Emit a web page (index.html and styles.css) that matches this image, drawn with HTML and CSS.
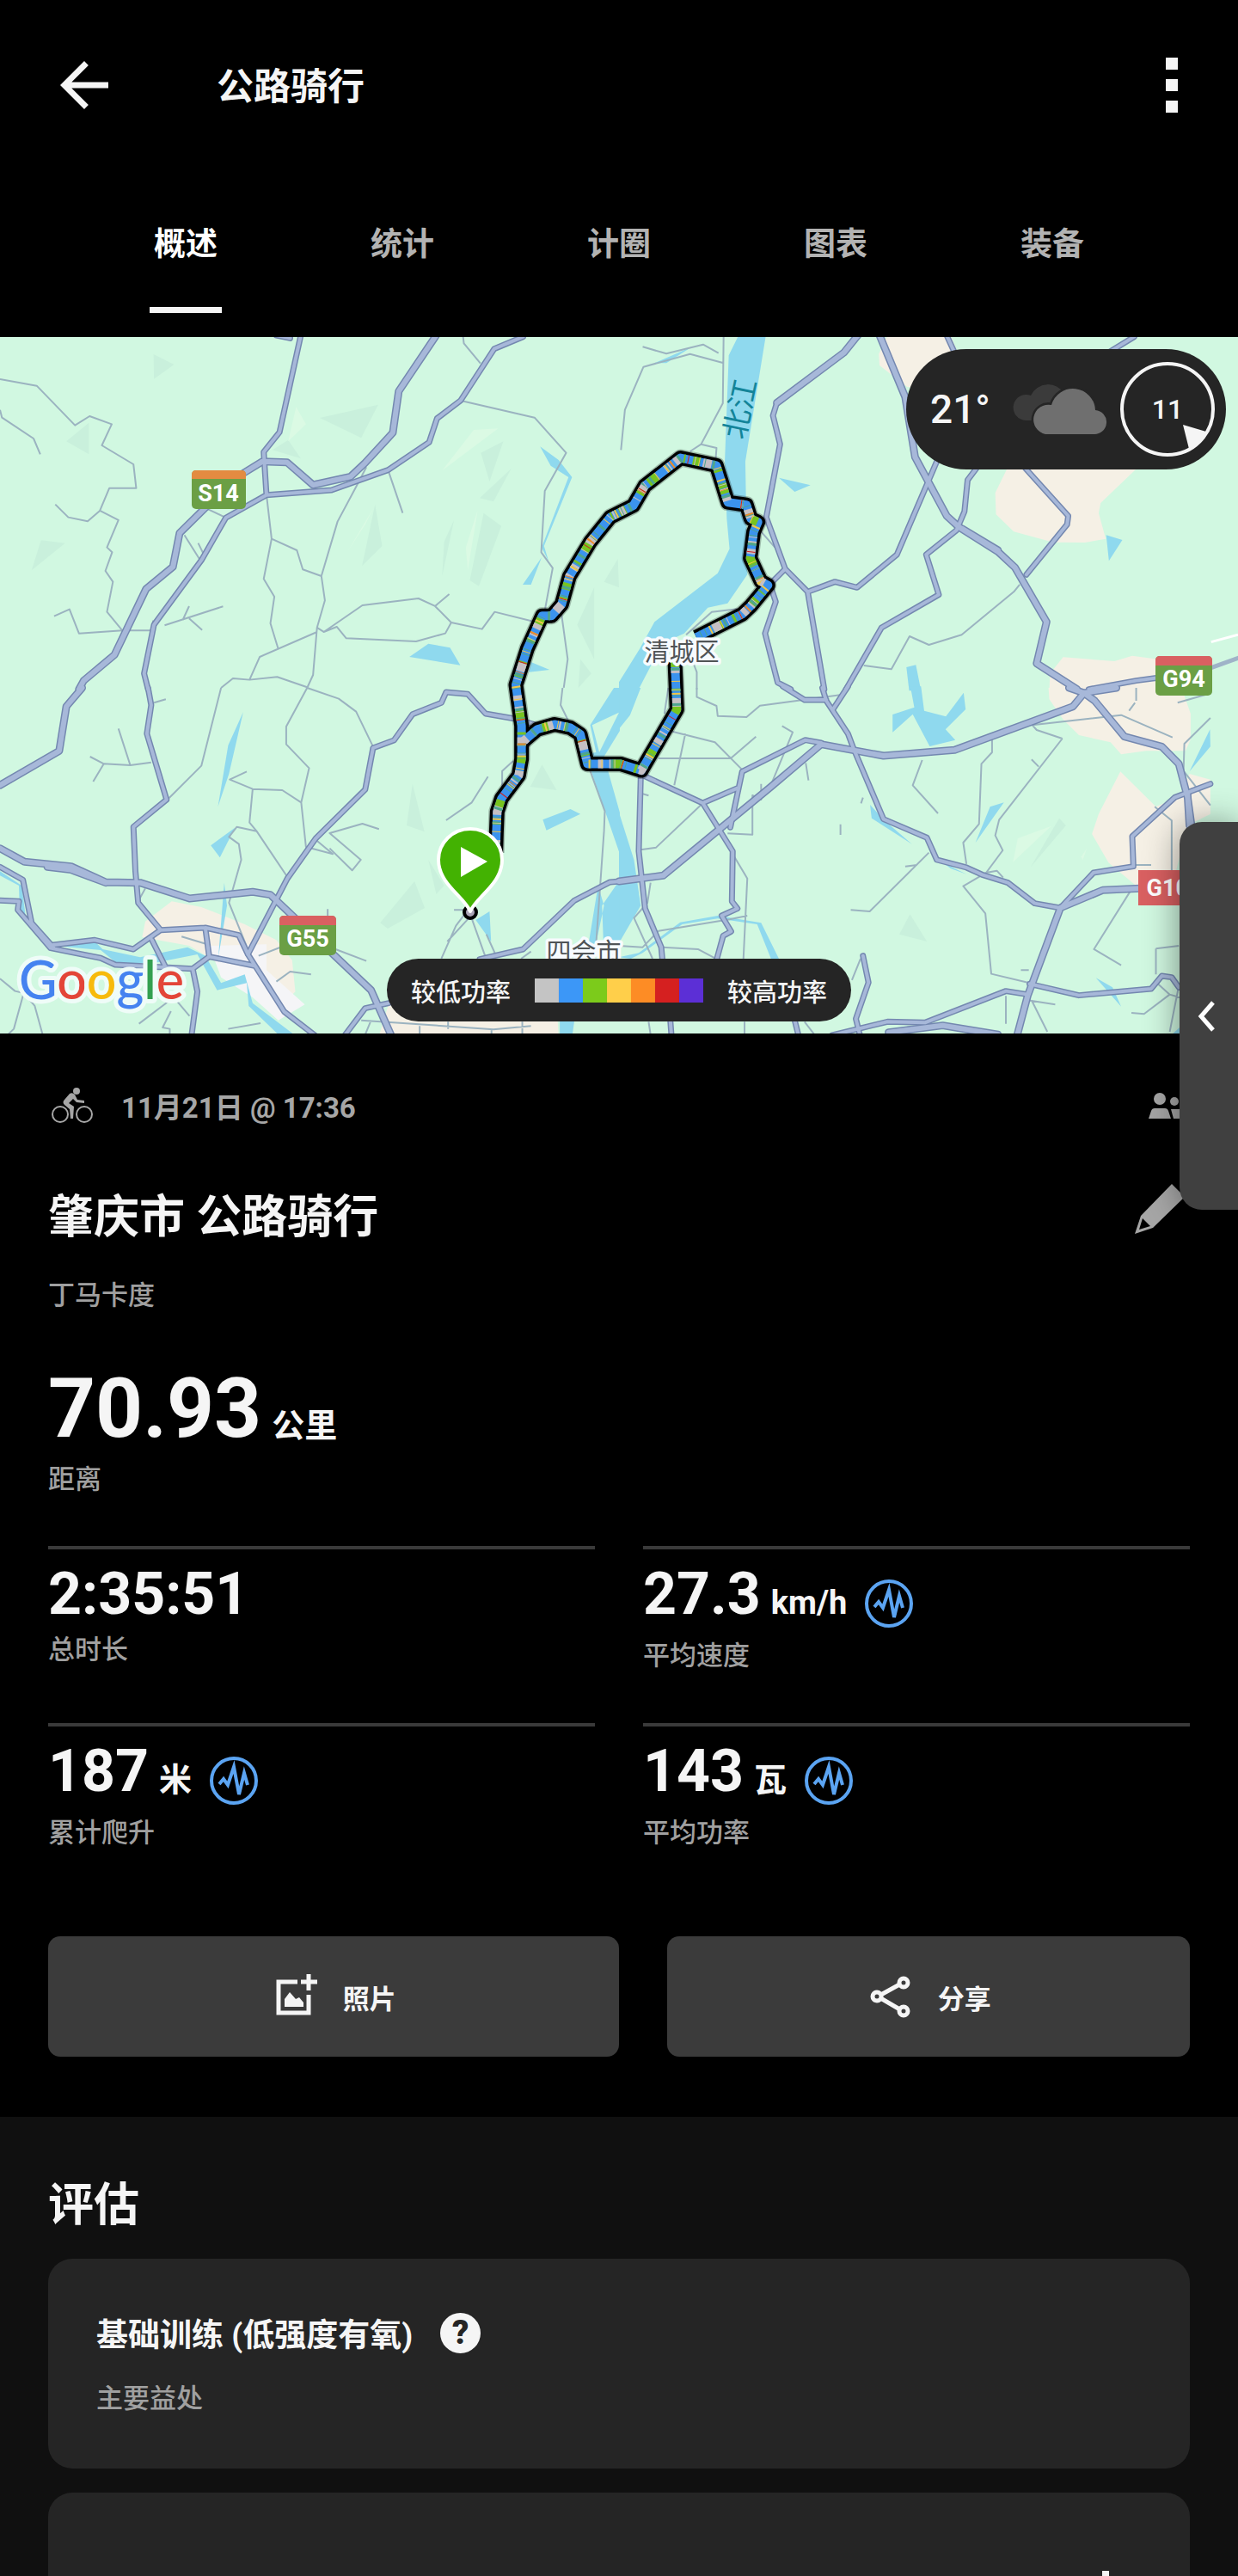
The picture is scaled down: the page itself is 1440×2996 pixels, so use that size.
FILE: index.html
```
<!DOCTYPE html>
<html lang="zh-CN">
    <head>
        <meta charset="utf-8">
        <meta name="viewport" content="width=device-width, initial-scale=1">
        <title>公路骑行</title>
        <link rel="stylesheet" href="styles.css">
    </head>
    <body>
        <header class="top-bar">
            <button class="icon-button" aria-label="返回">
                <svg class="icon-back" viewBox="0 0 24 24"><path d="M20 11H7.8l5.6-5.6L12 4l-8 8 8 8 1.4-1.4L7.8 13H20z"/></svg>
            </button>
            <h1>公路骑行</h1>
            <button class="icon-button" aria-label="更多">
                <svg class="icon-more" viewBox="0 0 14 64"><path d="M0 0h14v14H0zM0 25h14v14H0zM0 50h14v14H0z"/></svg>
            </button>
        </header>
        <nav class="tabs">
            <a class="active" href="#overview">概述</a>
            <a href="#stats">统计</a>
            <a href="#laps">计圈</a>
            <a href="#charts">图表</a>
            <a href="#gear">装备</a>
        </nav>

        <section class="map" id="overview">
            <svg class="map-canvas" viewBox="0 0 1440 810" role="img" aria-label="路线地图">
                <defs>
                    <!-- highways, one group per tile -->
                    <g id="highways">
                        <g transform="translate(0 -2) scale(.4592 .3333)">
                            <path d="M1105 0L1010 195 995 340 925 445 888 493 793 522 727 443 665 440 600 495 525 595 455 690 438 808 370 885 290 1115 212 1205 200 1235"/>
                        </g>
                        <g transform="translate(720 -2) scale(.4592 .3333)">
                            <path d="M660 0L725 215 750 425 830 630 860 668 960 755 1003 810 1083 1000 1058 1145 1160 1235M605 0L570 60 400 235M870 675L960 750"/>
                        </g>
                        <g transform="translate(0 408) scale(.4592 .3333)">
                            <path d="M208 0L168 65 150 220 0 340M0 560L62 607 180 623 268 678 355 680 480 735 640 712 685 722 940 1055 990 1210M120 625L180 635 268 680"/>
                        </g>
                        <g transform="translate(720 408) scale(.4592 .3333)">
                            <path d="M1140 0L1178 18 1205 45 1280 170 1375 205 1418 265 1440 380 1450 480M1178 18L1150 65 850 217 670 237 512 197 385 345 112 655 0 675M1118 768L1035 1075 1008 1215M1118 768L1225 706 1320 700M1178 18L1260 0M1440 370L1445 480M683 1202L820 1178 960 1210"/>
                        </g>
                    </g>
                    <g id="roads">
                        <g transform="translate(0 -2) scale(.4592 .3333)">
                            <path d="M1325 5L1252 47 1167 227 1107 290 1087 373 983 470 840 540 675 557 572 637 510 785 390 1010 365 1180 375 1235M762 0L708 338 668 407 675 557M700 0L735 10"/>
                        </g>
                        <g transform="translate(720 -2) scale(.4592 .3333)">
                            <path d="M400 235L390 280 408 380 373 635 421 815 478 895 520 1235M421 815L385 865M478 895L547 860 603 880 704 765 805 440M830 0L850 60M1305 5L1240 60M905 465L883 505 875 615 855 680 778 765 810 905 665 1020 575 1235M1030 465L1138 630 1135 660 1032 835M385 880L397 930 370 1040 402 1212 435 1235M1190 1235L1310 1205 1365 1195"/>
                        </g>
                        <g transform="translate(0 408) scale(.4592 .3333)">
                            <path d="M375 0L383 60 372 160 422 390 338 485 343 640 350 750 407 845 520 837 605 863 628 930 720 1130 800 1215M407 845L338 912 240 880 135 897M0 625L58 670 80 820 135 905M0 742L48 745 45 775 128 908 255 943 292 966 488 980 530 938 645 970M488 980L500 1060 485 1215M520 837L530 938M385 880L418 970M628 930L728 665 800 525 925 355 945 210 998 183 1045 92 1118 52 1130 15 1185 22 1230 90 1305 108 1365 132M1570 675L1545 678 1455 742 1325 912 1215 947M872 1215L925 1118 985 1100"/>
                        </g>
                        <g transform="translate(720 408) scale(.4592 .3333)">
                            <path d="M515 0L525 45 580 160 595 215 670 458 780 523 805 600 880 627 920 652 985 680 1053 752 1118 768 1202 645 1303 623 1300 518 1408 382 1498 335M415 -5L470 42 525 42M580 -5L542 75M512 192L472 182 312 292 282 487M300 350L212 402 60 305M55 315L50 570 66 770 107 905 110 950M212 402L288 570 286 745 300 770 260 795 284 850 264 865 247 950M618 935L632 1028 600 1155 610 1210M540 1212L680 1165 775 1168 980 1058 1035 1070M1040 1033L1165 1073 1348 1050 1375 1005 1400 1010 1418 1045M130 1160L133 1215M445 1160L455 1215M683 1202L740 1190"/>
                        </g>
                    </g>
                    <path id="route" d="M230 1285L232 1225 235 1160 250 1120 310 1050 320 1000 320 900 300 775 340 665 392 565 425 565 460 530 487 445 560 340 630 265 710 230 750 170 875 85 1000 108 1040 220 1105 228 1120 270 1145 280 1130 310 1118 390 1155 460 1180 472 1120 535 1090 560 930 630"/>
                    <path id="route-south" d="M855 700L862 850 738 1035 665 1015 550 1015 525 925 490 905 435 895 375 910 328 945"/>
                </defs>

                <rect class="land" width="1440" height="810"/>

                <!-- hill shading -->
                <g class="tile hill" transform="translate(0 -2) scale(.4592 .3333)">
                    <path d="M389 66L441 102 390 152zM225 305L168 370 225 415zM104 715L165 725 80 820zM958 242L810 288 915 358zM730 365L690 400 762 430zM1275 370L1218 410 1240 510zM1295 465L1215 568 1250 580zM1225 620L1270 665 1213 875 1190 855zM1150 645L1125 720 1120 840zM950 590L968 735 917 805zM1505 880L1462 1010 1505 1130zM1470 1130L1498 1180 1465 1230zM1565 780L1530 860 1568 880z"/>
                    <path class="light" d="M750 250L775 310 730 370zM1200 330L1262 325 1120 472zM945 605L925 660 880 755zM1210 610L1185 820 1180 740z"/>
                </g>
                <g class="tile hill" transform="translate(0 408) scale(.4592 .3333)">
                    <path d="M1373 268L1410 357 1343 345zM1045 335L1075 502 1030 480zM1050 675L1076 768 982 840 963 820zM1085 600L1105 720 1125 690z"/>
                </g>
                <g class="tile hill" transform="translate(720 408) scale(.4592 .3333)">
                    <path d="M737 790L780 885 710 860zM1115 455L1132 480 1043 625z"/>
                    <path class="light" d="M1095 482L1010 525 998 608zM1185 560L1170 590 1175 600z"/>
                </g>

                <!-- built-up areas -->
                <g class="tile town" transform="translate(720 -2) scale(.4592 .3333)">
                    <path d="M680 0H840L900 200 730 180 660 105 658 65zM985 460H1315L1220 585 1215 620 1233 710 1180 723 1100 722 1000 685 955 625 953 550zM1090 1235L1092 1180 1125 1123 1255 1137 1300 1118 1365 1130V1235z"/>
                </g>
                <g class="tile town" transform="translate(720 408) scale(.4592 .3333)">
                    <path d="M1088 0H1425L1448 90V180L1435 220H1335L1272 232 1245 190 1165 165 1125 110 1090 40zM1270 292L1360 415 1418 380 1445 300 1498 320V440L1440 480 1400 700H1318L1240 610 1198 510 1215 440z"/>
                </g>
                <g class="tile town" transform="translate(0 408) scale(.4592 .3333)">
                    <path d="M368 815L435 745 510 765 620 825 700 880 740 950 748 1060 720 1100 600 1000 480 900 360 870zM985 1100H1410L1415 1215H960z"/>
                    <path class="white" d="M530 900L675 895V985L772 1105 705 1160 640 1080 560 1010z"/>
                </g>

                <!-- rivers and lakes -->
                <g class="tile water" transform="translate(720 -2) scale(.4592 .3333)">
                    <path d="M303 0L278 70 268 440 273 640 280 745 250 830 90 1000 52 1095 0 1210V1240H48L110 1075 165 1040 225 950 275 935 325 835 320 440 372 0zM185 40L120 97 90 97zM405 497L485 523 445 546zM1234 697L1275 714 1241 787zM728 1158L752 1150 765 1240H735z"/>
                </g>
                <g class="tile water" transform="translate(720 408) scale(.4592 .3333)">
                    <path d="M0 0H55L28 95 0 143zM0 435L38 600 55 760 0 890zM738 -5H765L773 80 828 100 873 17 878 75 827 145 852 182 787 204 744 92 693 155V93L748 68zM636 408L670 460 742 545 640 455zM975 400L940 415 903 540zM1497 145L1445 292 1498 205zM820 610L880 650 840 630zM1208 1012L1250 1045 1272 1112zM0 940L50 925 155 818 250 795 360 820 405 945H385L350 825 250 805 160 825 60 925 30 945zM1400 1210L1420 1185V1210z"/>
                </g>
                <g class="tile water" transform="translate(0 -2) scale(.4592 .3333)">
                    <path d="M1368 388L1415 435 1449 495 1378 735 1390 790 1372 740 1440 495 1395 455zM1372 775L1345 870 1324 870zM1085 1076L1140 1090 1166 1151 1037 1122zM1345 1140L1392 1167 1340 1175z"/>
                </g>
                <g class="tile water" transform="translate(0 408) scale(.4592 .3333)">
                    <path d="M1570 0H1555L1495 130 1510 225 1485 230 1500 300 1570 580V435L1530 240 1570 150V80L1518 225 1500 130 1570 85zM616 85L580 300 552 415 578 200zM595 488L534 550 557 592zM568 680L575 760 553 940zM1375 460L1445 423 1470 440 1384 497zM1240 780L1244 885 1205 810zM0 640L55 690 65 800 85 830 50 780 48 690 0 655zM140 900L240 885 260 912 355 940 475 905 520 935 560 1030 620 1000 640 1100 745 1210H705L630 1110 625 1030 550 1055 500 930 390 960 295 960 255 915zM1570 670L1525 760 1530 945H1570zM1515 690L1530 760 1510 890 1490 900zM1418 1160H1455L1450 1210H1418z"/>
                </g>

                <!-- local roads -->
                <g class="tile lane" transform="translate(0 -2) scale(.4592 .3333)">
                    <path d="M0 153L93 176 190 314 227 282 283 310 258 384 338 450 345 533H277L253 612 222 649 173 635 140 590M0 260L5 287 85 360 102 415M253 612L300 645 271 740 284 757 267 822 286 860 271 965 310 1030M137 980L176 956 200 1040 310 1030H385L388 995M417 1012L565 946M479 945L463 993M479 988L512 1028M467 697L505 780M502 725L518 770M524 605L570 635M675 557L688 710 668 850 695 912 685 1005 705 1095M688 710L752 750 767 817 814 840 823 925 803 1020 793 1185 778 1230M814 840L855 650 908 513 928 460M983 470L1020 620M803 1035L658 1122 632 1202M560 1230L590 1197 632 1202 702 1192 778 1228M803 1020L820 1035 918 942 1060 918 1102 945 1138 903M1102 945L1143 1002 1128 1040 1054 1068 877 1057 853 1017 820 1035M1143 1002L1221 1025 1253 965 1355 1000M1173 5L1175 28 1217 98M1170 229L1354 287 1434 410 1380 543 1371 757 1400 812 1378 975M1422 970L1438 1130 1428 1230"/>
                </g>
                <g class="tile lane" transform="translate(720 -2) scale(.4592 .3333)">
                    <path d="M60 40L120 64 213 32 252 62M265 0L263 237 208 380 247 393 245 430M263 96L180 65 62 110 15 260 5 400M208 380L180 405M360 685L395 740M170 1045L235 965 300 955M190 1150L197 1175V1235M1015 870L1000 895 868 1045 785 1080 736 1050 690 1165 620 1152"/>
                    <path class="white-line" d="M1500 1070L1568 1045"/>
                    <path class="wide-line" d="M1500 1160L1570 1125"/>
                </g>
                <g class="tile lane" transform="translate(0 408) scale(.4592 .3333)">
                    <path d="M560 0L510 272 428 385M390 52L420 40M300 142L330 270M228 240L263 265 330 270 383 260M263 265L236 327M778 0L725 135V197L783 280 763 400 775 555 843 580 800 530M778 0L858 38 902 83 945 205M625 292L582 320 640 353 715 357 763 400M640 353L632 470 650 500 728 660M650 500L600 485 580 520 605 545 611 600 580 750 630 920M960 493L918 474 835 507 914 600 892 637 835 560M1236 310L1195 400 1130 462M1272 380V290L1300 255M1425 0L1420 60 1445 130M1495 290L1532 430 1530 500 1508 930M1190 800L1133 885M1150 775H1185L1155 830 1118 945M1195 805L1230 940M1232 860L1255 930M830 772V800M850 912L928 953M655 935L720 900M700 1025L735 990 788 1000M460 868L525 895M352 1172L440 1080 480 1145M0 1015L38 1058 60 1065 88 1110 108 1210M60 1065L35 1190 20 1210M433 1128L412 1185 430 1190V1210M578 1190L660 1170M915 1160L1250 1192 1345 1180M1063 1180V1210M1135 1165V1190M1245 1190V1210M1323 1165V1210M940 1160L925 1210M350 745L368 700M1345 920L1320 945"/>
                </g>
                <g class="tile lane" transform="translate(720 408) scale(.4592 .3333)">
                    <path d="M197 0V32L247 63 250 98 323 102 357 62 560 25M125 0L115 90M128 150L243 190 315 290M168 160L140 340M283 246L347 170M100 246H283M413 133L440 155 380 355M473 262L480 323M360 335V390L338 375V512L275 508M208 408L94 557 55 565M288 580L325 665 315 950M618 383L613 403M561 476V513M945 180V225L918 265 912 475 872 540 880 615M768 252L744 340 808 438M1123 177L1058 147 1047 130 1272 95 1402 173M1123 177L963 460 953 515 972 567 930 645 872 692 928 787 943 998 1040 1030M930 645L957 638 973 662M1045 250L1063 275M785 575L635 780 587 775M725 623L755 618M1303 618H1348M1357 415L1400 463V690M1295 710L1203 912 1272 968M1018 985H1038M980 1075V1172M1035 1090L1105 1105M1045 1090L1085 1200M1298 1134L1330 1138 1395 1070 1365 1033M1395 1070L1420 1080M1360 910V1000M1360 910L1418 900M1418 1040L1395 1200M1498 105L1432 195 1430 290 1498 410M1415 52L1495 20M1310 0V45M1307 52L1292 80M60 370L75 376M80 680L72 750 38 803 85 945M100 848L280 808 325 795M100 848L60 905 0 900M110 905L200 912 245 945M612 945L590 1020M75 1165L80 1210M318 1165V1210M470 1165L495 1210"/>
                </g>

                <use class="highway-edge" href="#highways"/>
                <use class="road-edge" href="#roads"/>
                <use class="highway-fill" href="#highways"/>
                <use class="road-fill" href="#roads"/>

                <!-- ridden track, coloured by power -->
                <g class="track" transform="translate(500 108) scale(.3333 .3827)">
                    <use class="track-glow" href="#route"/>
                    <use class="track-glow" href="#route-south"/>
                    <use class="track-edge" href="#route"/>
                    <use class="track-edge" href="#route-south"/>
                    <g class="track-power">
                        <use class="p-blue" href="#route"/>
                        <use class="p-blue" href="#route-south"/>
                        <use class="p-green" href="#route"/>
                        <use class="p-green" href="#route-south"/>
                        <use class="p-grey" href="#route"/>
                        <use class="p-grey" href="#route-south"/>
                        <use class="p-teal" href="#route"/>
                        <use class="p-teal" href="#route-south"/>
                        <use class="p-yellow" href="#route"/>
                        <use class="p-yellow" href="#route-south"/>
                        <use class="p-orange" href="#route"/>
                        <use class="p-red" href="#route"/>
                        <use class="p-red" href="#route-south"/>
                    </g>
                </g>
                <circle class="track-end" cx="547" cy="669" r="7"/>

                <g class="pin">
                    <path d="M547 668C540 651 510 636 510 608a37 36 0 0 1 74 0C584 636 554 651 547 668z"/>
                    <path class="pin-play" d="M536 593L567 610 536 628z"/>
                </g>

                <g class="shields">
                    <rect class="s-green" x="223" y="155" width="63" height="45" rx="5"/>
                    <path class="s-orange" d="M223 165v-5q0-5 5-5h53q5 0 5 5v5z"/>
                    <text x="254" y="191">S14</text>
                    <rect class="s-green" x="325" y="673" width="66" height="46" rx="5"/>
                    <path class="s-red" d="M325 684v-6q0-5 5-5h56q5 0 5 5v6z"/>
                    <text x="358" y="709">G55</text>
                    <rect class="s-green" x="1344" y="371" width="66" height="46" rx="5"/>
                    <path class="s-red" d="M1344 382v-6q0-5 5-5h56q5 0 5 5v6z"/>
                    <text x="1377" y="407">G94</text>
                    <rect class="s-red" x="1324" y="620" width="80" height="41"/>
                    <text x="1366" y="650">G107</text>
                </g>
                <text class="river-name" transform="translate(873 86) rotate(-78)">北江</text>
                <text class="place" x="793" y="377">清城区</text>
                <text class="place" x="679" y="726">四会市</text>
                <text class="google" x="22" y="770"><tspan class="g-blue">G</tspan><tspan class="g-red">o</tspan><tspan class="g-yellow">o</tspan><tspan class="g-blue">g</tspan><tspan class="g-green">l</tspan><tspan class="g-red">e</tspan></text>
            </svg>

            <div class="weather">
                <span class="temperature">21°</span>
                <svg class="icon-cloud" viewBox="0 0 110 62">
                    <path class="cloud-back" d="M16 44A15 15 0 1 1 22 15A22 22 0 0 1 61 13V44z"/>
                    <path class="cloud-front" d="M39 60A17 17 0 1 1 46 26A26 26 0 0 1 97 32A14 14 0 0 1 95 60z"/>
                </svg>
                <svg class="icon-wind" viewBox="0 0 112 112">
                    <circle cx="56" cy="56" r="53"/>
                    <path d="M74 74l27 8q-6 13-20 20z"/>
                    <text x="56" y="67">11</text>
                </svg>
            </div>

            <div class="legend">
                <span>较低功率</span>
                <div class="swatches"><i class="sw-grey"></i><i class="sw-blue"></i><i class="sw-green"></i><i class="sw-yellow"></i><i class="sw-orange"></i><i class="sw-red"></i><i class="sw-purple"></i></div>
                <span>较高功率</span>
            </div>
        </section>

        <button class="side-handle" aria-label="展开">
            <svg viewBox="0 0 20 36"><path d="M18 2L4 18 18 34"/></svg>
        </button>

        <main class="summary">
            <div class="meta">
                <svg class="icon-bike" viewBox="0 0 48 42">
                    <circle class="wheel" cx="10" cy="31" r="9"/>
                    <circle class="wheel" cx="38" cy="31" r="9"/>
                    <circle cx="29" cy="4" r="4"/>
                    <path d="M21 7q3-2 6 1l3 6 8 1v3l-9-1-4-4-5 5 6 4-1 14h-3l-1-11-6-5q-3-3 0-6z"/>
                </svg>
                <span class="date">11月21日 @ 17:36</span>
                <svg class="icon-people" viewBox="0 0 48 30">
                    <circle cx="13" cy="7" r="7"/><circle cx="30" cy="10" r="5"/>
                    <path d="M0 30l3-9q1-3 4-3h12q3 0 4 3l3 9zM26 19h12l5 11H29z"/>
                </svg>
            </div>
            <div class="title-row">
                <h2>肇庆市 公路骑行</h2>
                <button class="icon-button" aria-label="编辑">
                    <svg class="icon-edit" viewBox="0 0 64 58"><path d="M0 58L7 37 43 0 58 15 21 51zM5 53L18 49 9 40z" fill-rule="evenodd"/></svg>
                </button>
            </div>
            <p class="place-name">丁马卡度</p>

            <div class="distance">
                <div class="value"><strong>70.93</strong><span>公里</span></div>
                <p class="label">距离</p>
            </div>

            <div class="stats">
                <div class="stat">
                    <div class="value"><strong>2:35:51</strong></div>
                    <p class="label">总时长</p>
                </div>
                <div class="stat">
                    <div class="value"><strong>27.3</strong><span>km/h</span>
                        <a href="#charts" aria-label="平均速度图表"><svg class="icon-pulse" viewBox="0 0 58 58"><circle cx="29" cy="29" r="26"/><path d="M12 33l5-6 5 7 7-21 6 32 6-25 4 14"/></svg></a>
                    </div>
                    <p class="label">平均速度</p>
                </div>
                <div class="stat">
                    <div class="value"><strong>187</strong><span>米</span>
                        <a href="#charts" aria-label="累计爬升图表"><svg class="icon-pulse" viewBox="0 0 58 58"><circle cx="29" cy="29" r="26"/><path d="M12 33l5-6 5 7 7-21 6 32 6-25 4 14"/></svg></a>
                    </div>
                    <p class="label">累计爬升</p>
                </div>
                <div class="stat">
                    <div class="value"><strong>143</strong><span>瓦</span>
                        <a href="#charts" aria-label="平均功率图表"><svg class="icon-pulse" viewBox="0 0 58 58"><circle cx="29" cy="29" r="26"/><path d="M12 33l5-6 5 7 7-21 6 32 6-25 4 14"/></svg></a>
                    </div>
                    <p class="label">平均功率</p>
                </div>
            </div>

            <div class="actions">
                <button>
                    <svg viewBox="0 0 56 56"><path class="line" d="M31 11H9v36h35V26M44 2v19M35 11h19"/><path d="M16 40v-9l6-8 7 8 4-2 5 6v5z"/></svg>
                    照片
                </button>
                <button>
                    <svg viewBox="0 0 56 56"><path class="line" d="M14 28L43 12M14 28L43 45"/><circle class="node" cx="13" cy="28" r="5"/><circle class="node" cx="44" cy="12" r="5"/><circle class="node" cx="44" cy="45" r="5"/></svg>
                    分享
                </button>
            </div>
        </main>

        <section class="assessment">
            <h2>评估</h2>
            <div class="card">
                <div class="card-title">
                    <h3>基础训练 (低强度有氧)</h3>
                    <button class="help" aria-label="帮助">?</button>
                </div>
                <p class="label">主要益处</p>
            </div>
            <div class="card card-next">
                <svg class="icon-plus" viewBox="0 0 44 44"><path d="M18 0h8v18h18v8H26v18h-8V26H0v-8h18z"/></svg>
            </div>
        </section>
    </body>
</html>
```
FILE: styles.css
```
* {
    box-sizing: border-box;
}

body {
    margin: 0;
    position: relative;
    background-color: #000;
    color: #f5f5f5;
    font-family: Roboto, "Noto Sans CJK SC", sans-serif;
}

h1, h2, h3, p {
    margin: 0;
    font-weight: 700;
}

svg {
    display: block;
    fill: currentColor;
}

button {
    border: none;
    padding: 0;
    color: inherit;
    font-family: inherit;
    cursor: pointer;
}

.icon-button {
    background: none;
}

/* header */
.top-bar {
    display: flex;
    align-items: center;
    height: 198px;
    padding: 0 70px 0 56px;
}

.top-bar h1 {
    flex: 1;
    margin-left: 112px;
    padding-top: 4px;
    font-size: 43px;
    line-height: 60px;
}

.icon-back {
    width: 84px;
    height: 84px;
}

.icon-more {
    width: 14px;
    height: 64px;
}

.tabs {
    display: flex;
    height: 194px;
    padding: 0 90px;
}

.tabs a {
    flex: 1;
    display: flex;
    flex-direction: column;
    align-items: center;
    justify-content: space-between;
    padding: 60px 0 28px;
    color: #b3b3b3;
    font-size: 37px;
    font-weight: 700;
    line-height: 54px;
    text-decoration: none;
}

.tabs .active {
    color: #fff;
}

.tabs .active::after {
    content: "";
    width: 84px;
    height: 7px;
    background-color: #f5f5f5;
}

/* map */
.map {
    position: relative;
    overflow: hidden;
}

.map-canvas {
    width: 100%;
    height: auto;
}

.map-canvas path {
    vector-effect: non-scaling-stroke;
    stroke-linejoin: round;
}

.land { fill: #d1f8e1; }
.hill { fill: #c9f0dc; }
.hill .light { fill: #dbfae4; }
.town { fill: #f5f0e5; }
.town .white { fill: #f5f5f7; }
.water { fill: #8fd9ee; }

.lane {
    fill: none;
    stroke: #9bb3c0;
    stroke-width: 2px;
}

.lane .white-line {
    stroke: #fff;
    stroke-width: 3px;
}

.lane .wide-line {
    stroke: #9fb3c8;
    stroke-width: 5px;
}

.highway-edge, .road-edge, .highway-fill, .road-fill {
    fill: none;
    stroke: #7488b0;
    stroke-linecap: round;
}

.highway-edge { stroke-width: 9px; }
.road-edge { stroke-width: 7px; }

.highway-fill {
    stroke: #a7b8d9;
    stroke-width: 6px;
}

.road-fill {
    stroke: #a7b8d9;
    stroke-width: 4px;
}

.track {
    fill: none;
    stroke: #000;
}

.track-glow {
    stroke-width: 20px;
    opacity: .25;
}

.track-edge { stroke-width: 17px; }
.track-power { stroke-width: 10px; }
.p-blue { stroke: #3b93ee; }
.p-green { stroke: #78c41f; stroke-dasharray: 8 25 3 14 12 39 2 9; }
.p-grey { stroke: #c6c0c4; stroke-dasharray: 2 7 6 19 1 9 10 29 1 4; }
.p-teal { stroke: #4ea58f; stroke-dasharray: 1 8 3 23 1 5; }
.p-yellow { stroke: #f0c846; stroke-dasharray: 1 23 1 13 2 41; }
.p-orange { stroke: #ee8a2c; stroke-dasharray: 2 83 1 47; }
.p-red { stroke: #cf2222; stroke-dasharray: 1 67 1 93; }

.track-end {
    fill: #aaa3b5;
    stroke: #000;
    stroke-width: 4px;
}

.pin {
    fill: #43b202;
    stroke: #fff;
    stroke-width: 4px;
}

.pin-play {
    fill: #fff;
    stroke: none;
}

.s-green { fill: #6b9f45; }
.s-orange { fill: #e38b41; }
.s-red { fill: #d96061; }

.shields text {
    fill: #fff;
    font-size: 27px;
    font-weight: 700;
    text-anchor: middle;
}

.river-name {
    fill: #138499;
    font-size: 35px;
    text-anchor: middle;
}

.place {
    fill: #505456;
    stroke: #f7fbff;
    stroke-width: 7px;
    stroke-linejoin: round;
    paint-order: stroke;
    font-size: 29px;
    text-anchor: middle;
}

.google {
    stroke: #effcf8;
    stroke-width: 10px;
    stroke-linejoin: round;
    paint-order: stroke;
    font-family: Lato, sans-serif;
    font-size: 61px;
    font-weight: 500;
}

.g-blue { fill: #4583f0; }
.g-red { fill: #e34538; }
.g-yellow { fill: #f7ba0c; }
.g-green { fill: #34a050; }

.weather {
    position: absolute;
    top: 14px;
    right: 14px;
    display: flex;
    align-items: center;
    justify-content: space-between;
    width: 372px;
    height: 140px;
    padding: 0 12px 0 28px;
    border-radius: 70px;
    background-color: #252525;
}

.temperature {
    font-size: 46px;
    font-weight: 500;
}

.icon-cloud {
    width: 110px;
    height: 62px;
    margin-left: 10px;
}

.cloud-back { fill: #3b3b3b; }

.cloud-front {
    fill: #6f6f6f;
    stroke: #252525;
    stroke-width: 5px;
    paint-order: stroke;
}

.icon-wind {
    width: 112px;
    height: 112px;
}

.icon-wind circle {
    fill: none;
    stroke: #f5f5f5;
    stroke-width: 4px;
}

.icon-wind text {
    font-size: 32px;
    font-weight: 500;
    text-anchor: middle;
}

.legend {
    position: absolute;
    bottom: 14px;
    left: 50%;
    transform: translateX(-50%);
    display: flex;
    align-items: center;
    gap: 28px;
    height: 73px;
    padding: 0 28px;
    border-radius: 37px;
    background-color: #252525;
    font-size: 29px;
    font-weight: 500;
    white-space: nowrap;
}

.swatches {
    display: flex;
}

.swatches i {
    width: 28px;
    height: 28px;
}

.sw-grey { background-color: #c4c4c4; }
.sw-blue { background-color: #3c97f7; }
.sw-green { background-color: #7ccb1b; }
.sw-yellow { background-color: #ffcf4a; }
.sw-orange { background-color: #fd8c25; }
.sw-red { background-color: #d52020; }
.sw-purple { background-color: #5c2fd6; }

/* drawer handle over the right edge */
.side-handle {
    position: absolute;
    top: 956px;
    right: 0;
    display: flex;
    align-items: center;
    width: 68px;
    height: 451px;
    padding-left: 21px;
    border-radius: 26px 0 0 26px;
    background-color: #404040;
    box-shadow: 0 4px 40px rgba(0, 0, 0, .45);
}

.side-handle svg {
    width: 20px;
    height: 36px;
    fill: none;
    stroke: #fff;
    stroke-width: 5px;
}

/* summary */
.summary {
    padding: 54px 56px 70px;
}

.meta {
    display: flex;
    align-items: center;
    height: 60px;
    padding-left: 4px;
    color: #a6a6a6;
}

.icon-bike {
    width: 48px;
    height: 42px;
}

.wheel {
    fill: none;
    stroke: currentColor;
    stroke-width: 2px;
}

.date {
    flex: 1;
    margin-left: 33px;
    font-size: 33px;
    font-weight: 700;
}

.icon-people {
    width: 48px;
    height: 30px;
}

.title-row {
    display: flex;
    align-items: center;
    justify-content: space-between;
    height: 80px;
    margin-top: 60px;
}

h2 {
    font-size: 53px;
    line-height: 76px;
}

.icon-edit {
    width: 64px;
    height: 58px;
    margin-bottom: 20px;
    color: #a6a6a6;
}

.place-name, .label {
    color: #a0a0a0;
    font-size: 31px;
    font-weight: 500;
    line-height: 46px;
}

.place-name {
    margin-top: 28px;
}

.label {
    margin-top: 4px;
}

.value {
    display: flex;
    align-items: baseline;
}

.value span {
    margin-left: 12px;
    font-size: 38px;
    font-weight: 700;
    line-height: 40px;
}

.distance {
    margin-top: 52px;
}

.distance strong {
    font-size: 96px;
    line-height: 112px;
}

.stats {
    display: grid;
    grid-template-columns: 1fr 1fr;
    column-gap: 56px;
    margin-top: 54px;
}

.stat {
    height: 206px;
    padding-top: 14px;
    border-top: 4px solid #3a3a3a;
}

.stat strong {
    font-size: 68px;
    line-height: 76px;
}

.value a {
    align-self: flex-start;
    margin: 20px 0 5px 20px;
}

.icon-pulse {
    width: 58px;
    height: 58px;
    fill: none;
    stroke: #5ba4f2;
    stroke-width: 4px;
}

.actions {
    display: grid;
    grid-template-columns: 12fr 11fr;
    gap: 56px;
    margin-top: 42px;
}

.actions button {
    display: flex;
    align-items: center;
    justify-content: center;
    gap: 28px;
    height: 140px;
    border-radius: 14px;
    background-color: #3b3b3b;
    font-size: 31px;
    font-weight: 700;
}

.actions svg {
    width: 56px;
    height: 56px;
}

.actions .line, .actions .node {
    fill: none;
    stroke: currentColor;
    stroke-width: 5px;
}

.actions .node {
    fill: #3b3b3b;
}

/* assessment */
.assessment {
    padding: 65px 56px 0;
    background-color: #101010;
}

.card {
    height: 244px;
    margin-top: 24px;
    padding: 56px;
    border-radius: 28px;
    background-color: #252525;
}

.card-title {
    display: flex;
    align-items: center;
    gap: 32px;
    height: 60px;
    margin-bottom: 24px;
}

.card h3 {
    font-size: 37px;
}

.help {
    width: 47px;
    height: 47px;
    border-radius: 50%;
    background-color: #f5f5f5;
    color: #252525;
    font-size: 38px;
    font-weight: 900;
    line-height: 47px;
}

.card-next {
    display: flex;
    justify-content: flex-end;
    height: 97px;
    margin-top: 28px;
    padding: 91px 76px 0;
    border-radius: 28px 28px 0 0;
    overflow: hidden;
}

.icon-plus {
    flex: none;
    width: 44px;
    height: 44px;
}
```
